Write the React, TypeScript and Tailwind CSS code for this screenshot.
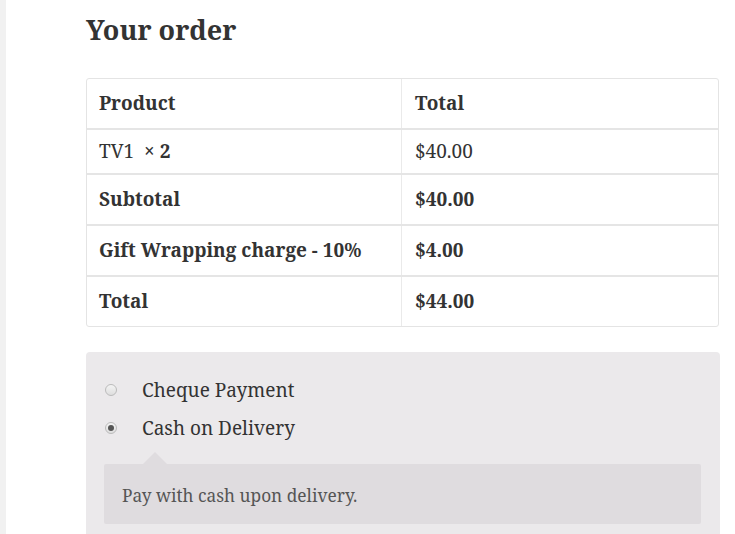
const serif = { fontFamily: '"Noto Serif", "DejaVu Serif", serif' };

type Row = { label: React.ReactNode; value: string; bold?: boolean; h: string };

const rows: Row[] = [
  { label: 'TV1', value: '$40.00', h: 'h-[45px]' },
  { label: 'Subtotal', value: '$40.00', bold: true, h: 'h-[51px]' },
  { label: 'Gift Wrapping charge - 10%', value: '$4.00', bold: true, h: 'h-[51px]' },
  { label: 'Total', value: '$44.00', bold: true, h: 'h-[51px]' },
];

function OrderTable() {
  return (
    <div className="w-[633px] rounded-[3px] border border-[#e4e4e4] text-[19px] text-[#333]">
      <div className="grid h-[49px] grid-cols-[315px_1fr] font-bold">
        <div className="flex items-center border-r border-[#eaeaea] pl-[12px]">Product</div>
        <div className="flex items-center pl-[13px]">Total</div>
      </div>
      {rows.map((r, i) => (
        <div key={i} className={`grid grid-cols-[315px_1fr] border-t-2 border-[#e5e5e5] ${r.h}`}>
          <div className={`flex items-center border-r border-[#eaeaea] pl-[12px] ${r.bold ? 'font-bold' : ''}`}>
            {i === 0 ? (
              <span>
                TV1&nbsp; <span className="font-bold">× 2</span>
              </span>
            ) : (
              r.label
            )}
          </div>
          <div className={`flex items-center pl-[13px] ${r.bold ? 'font-bold' : ''}`}>{r.value}</div>
        </div>
      ))}
    </div>
  );
}

function Radio({ checked }: { checked?: boolean }) {
  return (
    <span className="flex h-[12px] w-[12px] items-center justify-center rounded-full border border-[#bbb] bg-gradient-to-b from-[#f4f4f4] to-[#dedede]">
      {checked && <span className="h-[6px] w-[6px] rounded-full bg-[#555]" />}
    </span>
  );
}

export default function App() {
  return (
    <div className="flex min-h-[534px] w-[735px] overflow-hidden bg-white" style={serif}>
      <div className="w-[6px] shrink-0 bg-[#f1f1f1]" />
      <div className="pl-[80px] pt-[12px]">
        <h3 className="text-[27px] font-bold leading-[36px] text-[#333]">Your order</h3>
        <div className="mt-[30px]">
          <OrderTable />
        </div>
        <div className="mt-[25px] w-[634px] rounded-t-[4px] bg-[#ebe9eb] px-[18px] pt-[19px] pb-[10px] text-[#333]">
          <div className="flex h-[38px] items-center gap-[25px] pl-[1px] text-[19px]">
            <Radio />
            <span>Cheque Payment</span>
          </div>
          <div className="flex h-[38px] items-center gap-[25px] pl-[1px] text-[19px]">
            <Radio checked />
            <span>Cash on Delivery</span>
          </div>
          <div className="relative mt-[17px] flex h-[60px] w-[597px] items-center rounded-[2px] bg-[#dfdcdf] px-[18px] pt-[4px] text-[17.3px] text-[#555]">
            <span className="absolute -top-[12px] left-[39px] h-0 w-0 border-x-[12px] border-b-[12px] border-x-transparent border-b-[#dfdcdf]" />
            Pay with cash upon delivery.
          </div>
        </div>
      </div>
    </div>
  );
}
